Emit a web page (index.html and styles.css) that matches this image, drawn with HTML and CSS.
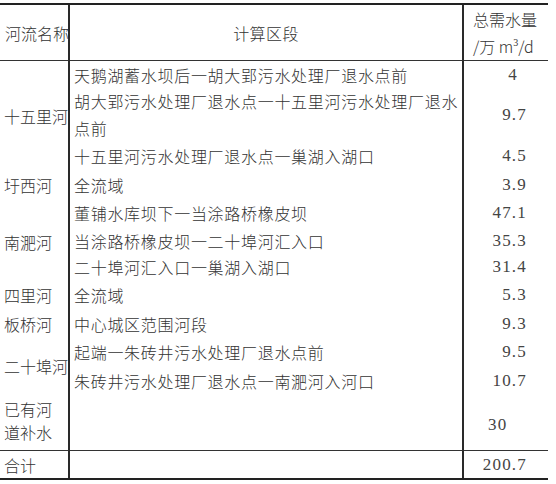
FILE: index.html
```html
<!DOCTYPE html>
<html lang="zh">
<head>
<meta charset="utf-8">
<link rel="stylesheet" href="styles.css">
</head>
<body>
<table class="t">
  <thead>
    <tr class="h">
      <th class="c1">河流名称</th>
      <th class="c2 ctr">计算区段</th>
      <th class="c3 hd">总需水量<br>/万 m<sup>3</sup>/d</th>
    </tr>
  </thead>
  <tbody>
    <tr class="r1">
      <td class="c1" rowspan="3">十五里河</td>
      <td class="c2">天鹅湖蓄水坝后一胡大郢污水处理厂退水点前</td>
      <td class="c3 n n-4">4</td>
    </tr>
    <tr class="r2">
      <td class="c2 two">胡大郢污水处理厂退水点一十五里河污水处理厂退水<br>点前</td>
      <td class="c3 n">9.7</td>
    </tr>
    <tr class="r3">
      <td class="c2">十五里河污水处理厂退水点一巢湖入湖口</td>
      <td class="c3 n">4.5</td>
    </tr>
    <tr class="r4">
      <td class="c1">圩西河</td>
      <td class="c2">全流域</td>
      <td class="c3 n">3.9</td>
    </tr>
    <tr class="r5">
      <td class="c1 nf" rowspan="3">南淝河</td>
      <td class="c2">董铺水库坝下一当涂路桥橡皮坝</td>
      <td class="c3 n">47.1</td>
    </tr>
    <tr class="r6">
      <td class="c2">当涂路桥橡皮坝一二十埠河汇入口</td>
      <td class="c3 n">35.3</td>
    </tr>
    <tr class="r7">
      <td class="c2">二十埠河汇入口一巢湖入湖口</td>
      <td class="c3 n">31.4</td>
    </tr>
    <tr class="r8">
      <td class="c1">四里河</td>
      <td class="c2">全流域</td>
      <td class="c3 n">5.3</td>
    </tr>
    <tr class="r9">
      <td class="c1">板桥河</td>
      <td class="c2">中心城区范围河段</td>
      <td class="c3 n">9.3</td>
    </tr>
    <tr class="r10">
      <td class="c1" rowspan="2">二十埠河</td>
      <td class="c2">起端一朱砖井污水处理厂退水点前</td>
      <td class="c3 n">9.5</td>
    </tr>
    <tr class="r11">
      <td class="c2">朱砖井污水处理厂退水点一南淝河入河口</td>
      <td class="c3 n">10.7</td>
    </tr>
    <tr class="r12">
      <td class="c1 two2 sep">已有河<br>道补水</td>
      <td class="c2 sep"></td>
      <td class="c3 n n-30 sep">30</td>
    </tr>
    <tr class="r13">
      <td class="c1">合计</td>
      <td class="c2"></td>
      <td class="c3 n">200.7</td>
    </tr>
  </tbody>
</table>
</body>
</html>
```

FILE: styles.css
```css
html, body {
  margin: 0;
  padding: 0;
  background: #ffffff;
}

body {
  font-family: "Noto Sans CJK SC", "Noto Sans", sans-serif;
  font-weight: 300;
  color: #333333;
  font-size: 16px;
}

.t {
  margin-top: 3px;
  width: 548px;
  border-collapse: separate;
  border-spacing: 0;
  border-top: 2px solid #222222;
  border-bottom: 2px solid #222222;
  table-layout: fixed;
}

.t th,
.t td {
  padding: 0;
  font-weight: 300;
  vertical-align: middle;
  text-align: left;
  line-height: 20px;
  white-space: nowrap;
  box-sizing: border-box;
}

.c1 {
  width: 70px;
  padding-left: 4px !important;
  border-right: 2px solid #2a2a2a;
  overflow: visible;
}

.c2 {
  width: 394px;
  padding-left: 4px !important;
  letter-spacing: 0.7px;
  border-right: 2px solid #2a2a2a;
}

.c3 {
  width: 84px;
}

.h th {
  height: 56px;
  border-bottom: 1px solid #333333;
}

.h .c1 {
  padding-left: 5px !important;
}

.ctr {
  text-align: center !important;
  padding-left: 0 !important;
  letter-spacing: 0.4px;
}

.hd {
  padding-left: 9px !important;
  line-height: 27px !important;
}

.hd sup {
  font-family: "Liberation Serif", serif;
  font-size: 10px;
  line-height: 0;
  vertical-align: 7px;
}

.n {
  font-family: "Liberation Serif", serif;
  font-weight: 400;
  color: #444444;
  text-align: right !important;
  padding-right: 21px !important;
  letter-spacing: 1.2px;
  font-size: 17px;
}

.n-4 {
  padding-right: 30px !important;
}

.n-30 {
  text-align: left !important;
  padding-left: 24px !important;
  padding-top: 4px !important;
}

.two {
  line-height: 27px !important;
}

.two2 {
  line-height: 23px !important;
  padding-bottom: 4px !important;
}

.nf {
  padding-top: 6px !important;
}

.r1 td { height: 27px; }
.r2 td { height: 54px; }
.r3 td { height: 28px; }
.r4 td { height: 29px; }
.r5 td { height: 28px; }
.r6 td { height: 28px; }
.r7 td { height: 24px; }
.r8 td { height: 31px; }
.r9 td { height: 27px; }
.r10 td { height: 30px; }
.r11 td { height: 28px; }
.r12 td { height: 56px; }
.r13 td { height: 27px; }

.sep {
  border-bottom: 1px solid #333333;
}
```
